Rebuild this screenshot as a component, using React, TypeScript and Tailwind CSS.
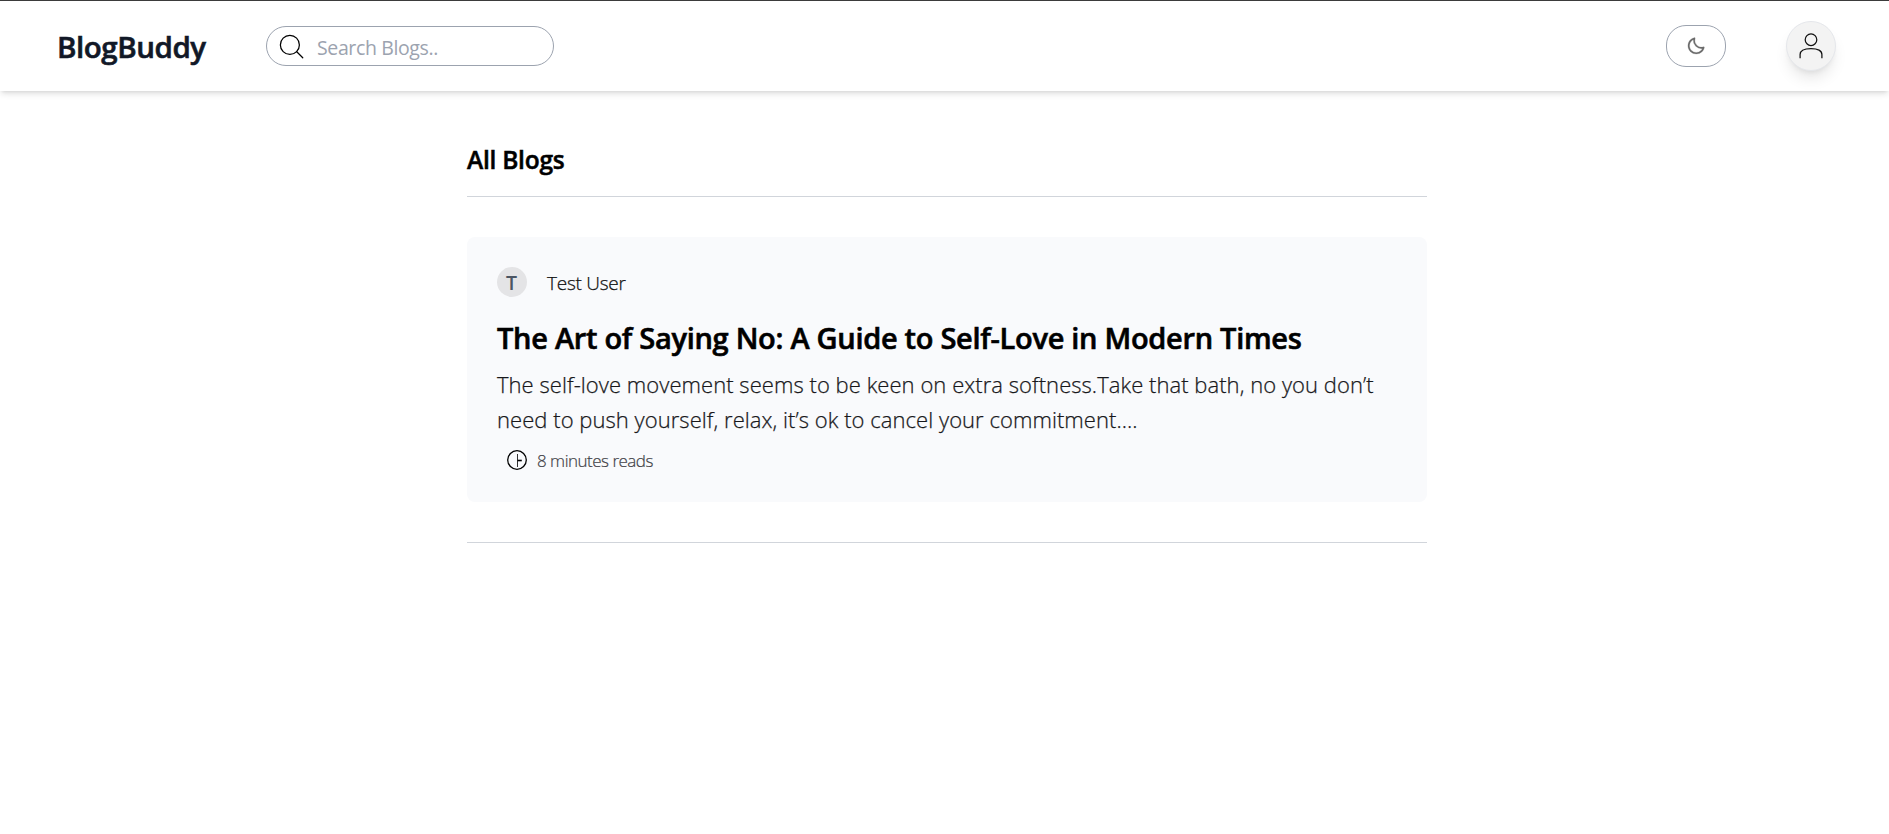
import { BiMoon } from "react-icons/bi";

function SearchIcon() {
  return (
    <svg viewBox="0 0 24 24" className="size-[30px] shrink-0" fill="none" stroke="#000" strokeWidth="1" strokeLinecap="round" strokeLinejoin="round">
      <circle cx="10.3" cy="10.3" r="7.6" />
      <path d="M15.8 15.8 20.6 20.6" />
    </svg>
  );
}

function UserIcon() {
  return (
    <svg viewBox="0 0 30 30" className="size-[30px]" fill="none" stroke="#111" strokeWidth="1.25">
      <circle cx="15" cy="8.7" r="5.8" />
      <path d="M4.1 27.2v-3.6C4.1 19.6 8 17.6 15 17.6s10.9 2 10.9 6v3.6" />
    </svg>
  );
}

function ClockIcon() {
  return (
    <svg viewBox="0 0 20 20" className="size-[20px] shrink-0" fill="none" stroke="#000">
      <circle cx="10" cy="10" r="9.3" strokeWidth="1.3" />
      <path d="M10.5 4v13" stroke="#333" strokeWidth="1" />
      <path d="M10.5 10.5h4.3" strokeWidth="1.6" />
    </svg>
  );
}

export default function App() {
  return (
    <div className="min-h-screen bg-white font-['Open_Sans',sans-serif] text-black">
      <header className="flex h-[91px] items-start border-t border-[#3b3b3b] bg-white pr-[53px] pl-[57px] shadow-[0_4px_6px_-1px_rgba(0,0,0,0.11),0_2px_4px_-2px_rgba(0,0,0,0.11)]">
        <div className="mt-[24px] w-[209px] text-[29.5px] leading-[44px] font-semibold tracking-[-0.45px] text-[#111827] [-webkit-text-stroke:0.6px]">BlogBuddy</div>
        <div className="mt-[25px] flex h-[40px] w-[288px] items-start rounded-full border border-[#9ca3af] pt-[5px] pl-[10px]">
          <SearchIcon />
          <input
            placeholder="Search Blogs.."
            className="ml-[10px] h-[30px] w-[200px] bg-transparent text-[19.5px] tracking-[-0.37px] outline-none placeholder:text-[#9ca3af]"
          />
        </div>
        <button className="mt-[24px] ml-auto flex h-[42px] w-[60px] items-center justify-center rounded-[20px] border border-[#9ca3af]">
          <BiMoon className="size-[20px] stroke-[#6b6b6b] text-[#6b6b6b]" strokeWidth={0.25} />
        </button>
        <button className="mt-[20px] ml-[60px] flex size-[50px] items-center justify-center rounded-full border border-[#e5e7eb] bg-[#f3f3f3] shadow-[0_10px_15px_-3px_rgba(0,0,0,0.1),0_4px_6px_-4px_rgba(0,0,0,0.1)]">
          <UserIcon />
        </button>
      </header>
      <main className="ml-[467px] w-[960px] pt-[52px]">
        <div className="h-[54px] border-b border-[#d1d5db]">
          <h1 className="text-[24.5px] leading-[34px] font-semibold tracking-[-0.25px] [-webkit-text-stroke:0.5px]">All Blogs</h1>
        </div>
        <article className="mt-[40px] h-[265px] rounded-[8px] bg-[#f9fafc] px-[30px] pt-[30px]">
          <div className="flex h-[30px] items-center">
            <div className="flex size-[30px] items-center justify-center rounded-full bg-[#e4e4e6] pt-[2px] pr-px text-[19.5px] font-semibold text-[#4b5563]">T</div>
            <span className="ml-[20px] pt-[2px] text-[19px] leading-[30px] font-light tracking-[-0.25px] text-[#111] [-webkit-text-stroke:0.25px]">Test User</span>
          </div>
          <h2 className="mt-[20px] text-[29px] leading-[42px] font-semibold tracking-[-0.29px] whitespace-nowrap [-webkit-text-stroke:0.6px]">The Art of Saying No: A Guide to Self-Love in Modern Times</h2>
          <p className="mt-[8px] text-[22px] leading-[35px] font-light tracking-[0.05px] whitespace-nowrap text-[#18181b] [-webkit-text-stroke:0.25px]">
            The self-love movement seems to be keen on extra softness.Take that bath, no you don’t<br />need to push yourself, relax, it’s ok to cancel your commitment....
          </p>
          <div className="mt-[10px] flex items-center pl-[10px]">
            <ClockIcon />
            <span className="ml-[10px] pt-[2px] text-[17px] leading-[24px] font-light tracking-[-0.5px] text-[#3f3f46] [-webkit-text-stroke:0.2px]">8 minutes reads</span>
          </div>
        </article>
        <div className="mt-[40px] h-px bg-[#d1d5db]" />
      </main>
    </div>
  );
}
